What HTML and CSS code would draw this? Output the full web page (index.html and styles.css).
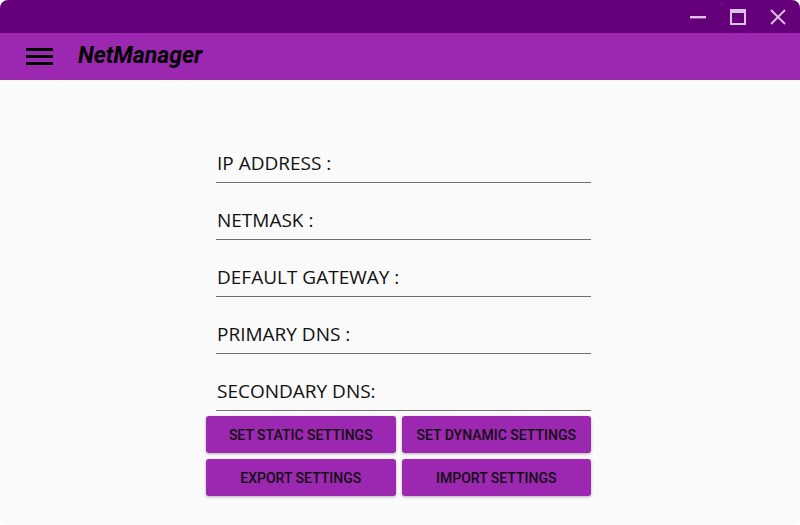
FILE: index.html
```html
<!DOCTYPE html>
<html>
<head>
<meta charset="utf-8">
<link rel="stylesheet" href="styles.css">
</head>
<body>
<div class="window">
  <div class="titlebar">
    <div class="ctrl">
      <svg width="16" height="16" viewBox="0 0 16 16"><rect x="0" y="7" width="16" height="2.4" fill="#dcc3e3"/></svg>
    </div>
    <div class="ctrl">
      <svg width="16" height="16" viewBox="0 0 16 16"><rect x="1" y="1" width="14" height="14" fill="none" stroke="#dcc3e3" stroke-width="2"/><rect x="1" y="1" width="14" height="3" fill="#dcc3e3"/></svg>
    </div>
    <div class="ctrl">
      <svg width="16" height="16" viewBox="0 0 16 16"><path d="M1 1 L15 15 M15 1 L1 15" stroke="#dcc3e3" stroke-width="1.8"/></svg>
    </div>
  </div>
  <div class="appbar">
    <svg class="menu" width="27" height="17" viewBox="0 0 27 17"><rect x="0" y="0" width="27" height="3" fill="#000"/><rect x="0" y="7" width="27" height="3" fill="#000"/><rect x="0" y="14" width="27" height="3" fill="#000"/></svg>
    <span class="title">NetManager</span>
  </div>
  <div class="content">
    <div class="form">
      <div class="field"><span>IP ADDRESS :</span></div>
      <div class="field"><span>NETMASK :</span></div>
      <div class="field"><span>DEFAULT GATEWAY :</span></div>
      <div class="field"><span>PRIMARY DNS :</span></div>
      <div class="field"><span>SECONDARY DNS:</span></div>
    </div>
    <div class="buttons">
      <button class="btn">SET STATIC SETTINGS</button>
      <button class="btn">SET DYNAMIC SETTINGS</button>
      <button class="btn">EXPORT SETTINGS</button>
      <button class="btn">IMPORT SETTINGS</button>
    </div>
  </div>
</div>
</body>
</html>
```
FILE: styles.css
```css
html, body {
  margin: 0;
  padding: 0;
  background: #ffffff;
}
.window {
  width: 800px;
  height: 525px;
  border-radius: 8px;
  overflow: hidden;
  background: #fafafa;
  display: flex;
  flex-direction: column;
}
.titlebar {
  height: 33px;
  background: #65007a;
  display: flex;
  justify-content: flex-end;
  align-items: center;
  padding-right: 14px;
  gap: 24px;
  box-sizing: border-box;
}
.ctrl {
  width: 16px;
  height: 16px;
  display: flex;
}
.appbar {
  height: 47px;
  background: #9c27b0;
  display: flex;
  align-items: center;
  padding-left: 26px;
  box-sizing: border-box;
}
.menu {
  display: block;
  margin-top: -1px;
}
.title {
  margin-left: 25px;
  margin-top: -2px;
  font-family: Roboto, "Liberation Sans", sans-serif;
  font-weight: 700;
  font-style: italic;
  font-size: 23px;
  color: #000;
}
.content {
  flex: 1;
  padding-top: 46px;
  padding-left: 206px;
}
.form {
  width: 375px;
  margin-left: 10px;
}
.field {
  border-bottom: 1px solid #707070;
  display: flex;
  align-items: flex-end;
  padding-left: 1px;
  padding-bottom: 8px;
  height: 48px;
}
.field span {
  font-family: "Open Sans", "Noto Sans", sans-serif;
  font-size: 19px;
  line-height: 22px;
  color: #111;
}
.buttons {
  width: 385px;
  margin-top: 5px;
  display: grid;
  grid-template-columns: 1fr 1fr;
  gap: 6px;
}
.btn {
  height: 37px;
  border: none;
  border-radius: 3px;
  background: #9c27b0;
  color: #111;
  font-family: Roboto, "Liberation Sans", sans-serif;
  font-weight: 500;
  font-size: 14px;
  box-shadow: 0 1px 3px rgba(0,0,0,0.3);
  padding: 0;
}
```
